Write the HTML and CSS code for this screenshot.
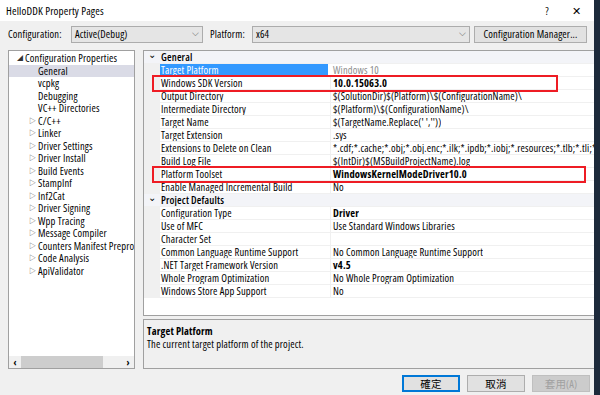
FILE: index.html
```html
<!DOCTYPE html>
<html lang="zh-Hant">
<head>
    <meta charset="UTF-8">
    <title>HelloDDK Property Pages</title>
    <link rel="stylesheet" href="styles.css">
</head>
<body>

<div class="dialog">
    <!-- Title bar -->
    <div class="titlebar">
        <span class="title">HelloDDK Property Pages</span>
        <span class="help">?</span>
        <span class="close">✕</span>
    </div>

    <!-- Configuration row -->
    <div class="toolbar">
        <span class="lbl lbl-config">Configuration:</span>
        <div class="combo combo-config"><span>Active(Debug)</span><span class="arrow">⌵</span></div>
        <span class="lbl lbl-platform">Platform:</span>
        <div class="combo combo-platform"><span>x64</span><span class="arrow">⌵</span></div>
        <button class="btn btn-manager">Configuration Manager...</button>
    </div>

    <div class="main">
        <!-- Tree -->
        <div class="tree">
            <div class="tree-items">
                <div class="node root"><span class="tw open">◢</span>Configuration Properties</div>
                <div class="node selected">General</div>
                <div class="node">vcpkg</div>
                <div class="node">Debugging</div>
                <div class="node">VC++ Directories</div>
                <div class="node"><span class="tw">▷</span>C/C++</div>
                <div class="node"><span class="tw">▷</span>Linker</div>
                <div class="node"><span class="tw">▷</span>Driver Settings</div>
                <div class="node"><span class="tw">▷</span>Driver Install</div>
                <div class="node"><span class="tw">▷</span>Build Events</div>
                <div class="node"><span class="tw">▷</span>StampInf</div>
                <div class="node"><span class="tw">▷</span>Inf2Cat</div>
                <div class="node"><span class="tw">▷</span>Driver Signing</div>
                <div class="node"><span class="tw">▷</span>Wpp Tracing</div>
                <div class="node"><span class="tw">▷</span>Message Compiler</div>
                <div class="node"><span class="tw">▷</span>Counters Manifest Preprocessor</div>
                <div class="node"><span class="tw">▷</span>Code Analysis</div>
                <div class="node"><span class="tw">▷</span>ApiValidator</div>
            </div>
            <div class="hscroll">
                <span class="sarrow">‹</span>
                <div class="track"><div class="thumb"></div></div>
                <span class="sarrow">›</span>
            </div>
        </div>

        <!-- Property grid + description -->
        <div class="right">
            <div class="grid">
                <div class="row cat"><span class="chev">⌄</span><span class="name">General</span><span class="val"></span></div>
                <div class="row"><span class="gut"></span><span class="name active">Target Platform</span><span class="val dim">Windows 10</span></div>
                <div class="row"><span class="gut"></span><span class="name">Windows SDK Version</span><span class="val b">10.0.15063.0</span></div>
                <div class="row"><span class="gut"></span><span class="name">Output Directory</span><span class="val">$(SolutionDir)$(Platform)\$(ConfigurationName)\</span></div>
                <div class="row"><span class="gut"></span><span class="name">Intermediate Directory</span><span class="val">$(Platform)\$(ConfigurationName)\</span></div>
                <div class="row"><span class="gut"></span><span class="name">Target Name</span><span class="val">$(TargetName.Replace(' ',''))</span></div>
                <div class="row"><span class="gut"></span><span class="name">Target Extension</span><span class="val">.sys</span></div>
                <div class="row"><span class="gut"></span><span class="name">Extensions to Delete on Clean</span><span class="val">*.cdf;*.cache;*.obj;*.obj.enc;*.ilk;*.ipdb;*.iobj;*.resources;*.tlb;*.tli;*.tlh;*.tmp</span></div>
                <div class="row"><span class="gut"></span><span class="name">Build Log File</span><span class="val">$(IntDir)$(MSBuildProjectName).log</span></div>
                <div class="row"><span class="gut"></span><span class="name">Platform Toolset</span><span class="val b">WindowsKernelModeDriver10.0</span></div>
                <div class="row"><span class="gut"></span><span class="name">Enable Managed Incremental Build</span><span class="val">No</span></div>
                <div class="row cat"><span class="chev">⌄</span><span class="name">Project Defaults</span><span class="val"></span></div>
                <div class="row"><span class="gut"></span><span class="name">Configuration Type</span><span class="val b">Driver</span></div>
                <div class="row"><span class="gut"></span><span class="name">Use of MFC</span><span class="val">Use Standard Windows Libraries</span></div>
                <div class="row"><span class="gut"></span><span class="name">Character Set</span><span class="val"></span></div>
                <div class="row"><span class="gut"></span><span class="name">Common Language Runtime Support</span><span class="val">No Common Language Runtime Support</span></div>
                <div class="row"><span class="gut"></span><span class="name">.NET Target Framework Version</span><span class="val b">v4.5</span></div>
                <div class="row"><span class="gut"></span><span class="name">Whole Program Optimization</span><span class="val">No Whole Program Optimization</span></div>
                <div class="row"><span class="gut"></span><span class="name">Windows Store App Support</span><span class="val">No</span></div>

                <!-- red highlight boxes -->
                <div class="mark mark-sdk"></div>
                <div class="mark mark-toolset"></div>
            </div>
            <div class="desc">
                <div class="desc-title">Target Platform</div>
                <div class="desc-text">The current target platform of the project.</div>
            </div>
        </div>
    </div>

    <!-- Bottom buttons -->
    <div class="footer">
        <button class="btn btn-ok">確定</button>
        <button class="btn">取消</button>
        <button class="btn disabled">套用(A)</button>
    </div>
</div>

</body>
</html>
```

FILE: styles.css
```css
body {
    margin: 0;
    background-color: #1d2a3b;
    color: #000;
}

/* Dialog window */
.dialog {
    width: 594px;
    height: 395px;
    background-color: #f0f0f0;
    display: flex;
    flex-direction: column;
    overflow: hidden;
    font-family: "Open Sans", "Noto Sans CJK TC", sans-serif;
    font-stretch: semi-condensed;
    font-size: 10.5px;
    letter-spacing: 0.15px;
}

.titlebar {
    height: 21px;
    background-color: #fff;
    display: flex;
    align-items: center;
    padding-left: 6px;
    font-size: 11px;
}

.titlebar .title {
    flex: 1;
}

.titlebar .help {
    width: 30px;
    text-align: center;
}

.titlebar .close {
    width: 30px;
    text-align: center;
    font-size: 11px;
    font-stretch: normal;
    margin-right: 2px;
}

/* Configuration row */
.toolbar {
    height: 26px;
    display: flex;
    align-items: center;
    padding-left: 8px;
    white-space: nowrap;
}

.lbl-config {
    width: 63px;
}

.lbl-platform {
    width: 42px;
    margin-left: 7px;
}

.combo {
    border: 1px solid #acacac;
    background-color: #e5e5e5;
    display: flex;
    align-items: center;
    padding: 0 3px;
    box-sizing: border-box;
    height: 17px;
}

.combo span:first-child {
    flex: 1;
}

.combo .arrow {
    font-size: 9px;
    color: #555;
    line-height: 1;
    margin-top: -4px;
}

.combo-config {
    width: 132px;
}

.combo-platform {
    width: 218px;
    margin-right: 4px;
}

.btn {
    font-family: inherit;
    font-stretch: inherit;
    letter-spacing: inherit;
    font-size: 10.5px;
    background-color: #e1e1e1;
    border: 1px solid #adadad;
    padding: 0;
    height: 17px;
    color: #000;
    white-space: nowrap;
}

.btn-manager {
    width: 113px;
}

/* Main area */
.main {
    display: flex;
    height: 319px;
    padding: 3px 0 0 8px;
    gap: 8px;
}

.tree {
    width: 127px;
    border: 1px solid #a0a0a0;
    background-color: #fff;
    display: flex;
    flex-direction: column;
    box-sizing: border-box;
}

.tree-items {
    flex: 1;
    padding-top: 1px;
    overflow: hidden;
}

.node {
    height: 12.5px;
    line-height: 12.5px;
    white-space: nowrap;
    padding-left: 29px;
}

.node.root {
    padding-left: 16px;
}

.node.selected {
    background-color: #dadbe6;
}

.tw {
    display: inline-block;
    width: 9px;
    font-size: 7px;
    color: #555;
    margin-left: -9px;
    vertical-align: top;
}

.tw.open {
    color: #333;
    font-size: 6px;
    width: 8px;
    margin-left: -8px;
}

.hscroll {
    height: 12px;
    display: flex;
    align-items: center;
    background-color: #f0f0f0;
}

.sarrow {
    width: 12px;
    text-align: center;
    font-weight: bold;
    font-size: 10px;
    line-height: 12px;
}

.track {
    flex: 1;
    height: 12px;
}

.thumb {
    width: 82px;
    height: 12px;
    background-color: #cdcdcd;
}

/* Right side */
.right {
    flex: 1;
    display: flex;
    flex-direction: column;
    gap: 3px;
    padding-right: 5px;
}

.grid {
    height: 266px;
    border: 1px solid #a0a0a0;
    border-right-color: #d0d0d0;
    background-color: #fff;
    box-sizing: border-box;
    position: relative;
    overflow: hidden;
}

.row {
    display: flex;
    height: 13px;
    line-height: 12px;
    border-bottom: 1px solid #f0f0f0;
    box-sizing: border-box;
    white-space: nowrap;
}

.gut {
    width: 16px;
    background-color: #f0f0f0;
    flex-shrink: 0;
}

.chev {
    width: 16px;
    flex-shrink: 0;
    text-align: center;
    font-size: 10px;
    line-height: 7px;
    font-weight: normal;
}

.name {
    width: 171px;
    box-sizing: border-box;
    flex-shrink: 0;
    padding-left: 1px;
    border-right: 1px solid #f0f0f0;
    overflow: hidden;
}

.name.active {
    background-color: #3399ff;
    color: #fff;
    border-right: 3px solid #fff;
}

.val {
    padding-left: 2px;
    overflow: hidden;
}

.val.b {
    font-weight: bold;
}

.val.dim {
    color: #8d8d8d;
}

.row.cat {
    background-color: #f3f4f8;
    font-weight: 600;
    font-size: 10.5px;
}

.row.cat .name {
    border-right: none;
}

/* Red highlight boxes */
.mark {
    position: absolute;
    border: 2px solid #ee1c24;
    box-sizing: border-box;
}

.mark-sdk {
    left: 8px;
    top: 24px;
    width: 406px;
    height: 17px;
}

.mark-toolset {
    left: 8px;
    top: 115px;
    width: 434px;
    height: 17px;
}

/* Description panel */
.desc {
    height: 50px;
    border: 1px solid #a0a0a0;
    box-sizing: border-box;
    padding: 5px 3px;
}

.desc-title {
    font-weight: bold;
    line-height: 13px;
}

.desc-text {
    line-height: 13px;
}

/* Footer */
.footer {
    display: flex;
    justify-content: flex-end;
    gap: 7px;
    padding: 6px 4px 0 0;
}

.footer .btn {
    width: 58px;
}

.btn-ok {
    border: 1px solid #0078d7;
    box-shadow: inset 0 0 0 1px #0078d7;
}

.btn.disabled {
    color: #a0a0a0;
    background-color: #cccccc;
    border-color: #bfbfbf;
}
```
